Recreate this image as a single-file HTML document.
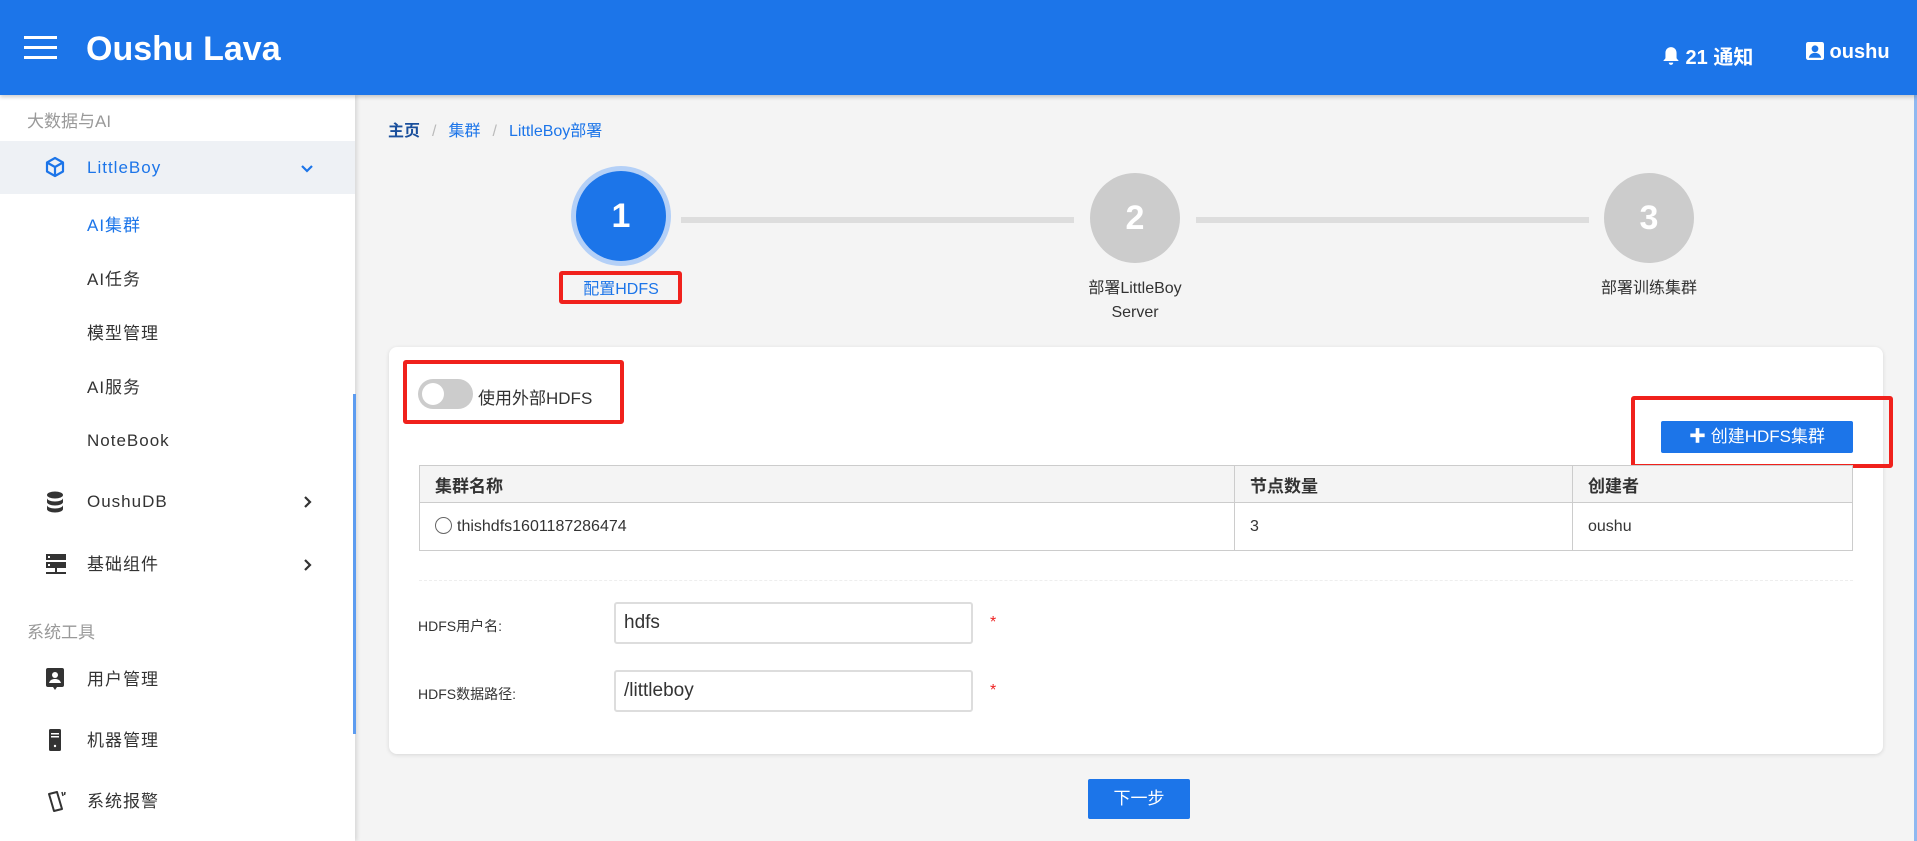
<!DOCTYPE html>
<html><head><meta charset="utf-8"><style>
*{box-sizing:border-box;margin:0;padding:0}
body{width:1917px;height:841px;overflow:hidden;background:#f4f4f4;font-family:"Liberation Sans","Noto Sans CJK SC",sans-serif;color:#333;position:relative}
.hdr{position:absolute;left:0;top:0;width:1917px;height:95px;background:#1c75e9;color:#fff;box-shadow:0 2px 4px rgba(0,0,0,.2);z-index:3}
.ham{position:absolute;left:24px;top:36px;width:33px}
.ham i{display:block;height:3px;background:#fff;margin-bottom:7px}
.logo{position:absolute;left:86px;top:30px;font-size:34px;font-weight:bold}
.hr{position:absolute;top:41px;font-size:20px;font-weight:bold}
.side{position:absolute;left:0;top:95px;width:355px;height:746px;background:#fff;box-shadow:2px 0 4px rgba(0,0,0,.12);z-index:2}
.sb{position:absolute;left:353px;top:394px;width:3px;height:340px;background:#5d9cf0;z-index:3}
.grp{position:absolute;left:27px;font-size:17px;color:#999}
.it{position:absolute;left:0;width:355px;height:54px;line-height:54px;font-size:17px;letter-spacing:1px;color:#333}
.it .t{position:absolute;left:87px}
.it .ic{position:absolute;left:45px;top:17px}
.it .ch{position:absolute;left:301px;top:20px}
.bc{position:absolute;left:388px;top:117px;font-size:16px;color:#1c75e9}
.bc b{color:#1a4f9c}
.bc s{text-decoration:none;color:#bbb;margin:0 12px}
.circ{position:absolute;width:90px;height:90px;border-radius:50%;background:#ccc;color:#fff;font-size:34px;font-weight:bold;text-align:center;line-height:90px}
.line{position:absolute;height:6px;background:#ddd;top:217px}
.lbl{position:absolute;font-size:16px;color:#333;text-align:center;width:200px;line-height:24px}
.card{position:absolute;left:389px;top:347px;width:1494px;height:407px;background:#fff;border-radius:8px;box-shadow:0 1px 4px rgba(0,0,0,.12)}
.red{position:absolute;border:4px solid #f0211c;border-radius:3px}
table{position:absolute;left:419px;top:465px;width:1434px;border-collapse:collapse;font-size:16px}
td,th{border:1px solid #ccc;padding:0 15px;text-align:left}
th{height:37px;background:#f4f4f4;font-weight:bold;font-size:17px}
td{height:48px}
.fl{position:absolute;left:418px;font-size:14px;color:#333}
.inp{position:absolute;left:614px;width:359px;height:42px;border:2px solid #ddd;border-radius:3px;font-size:19px;line-height:38px;padding:0 8px;color:#333}
.ast{position:absolute;left:990px;color:#e22;font-size:16px}
.btn{position:absolute;background:#1c75e9;color:#fff;border-radius:2px;text-align:center}
</style></head><body>
<div class="hdr">
<div class="ham"><i></i><i></i><i></i></div>
<div class="logo">Oushu Lava</div>
<div class="hr" style="left:1662px"><svg width="18" height="20" viewBox="0 0 16 18" style="vertical-align:-2px"><path d="M8 1c-3 0-5 2.3-5 5.3V11L1 13.5h14L13 11V6.3C13 3.3 11 1 8 1zM6 15h4a2 2 0 0 1-4 0z" fill="#fff"/></svg> 21 通知</div>
<div class="hr" style="left:1806px"><svg width="18" height="18" viewBox="0 0 16 16" style="vertical-align:-2px"><rect x="0" y="0" width="16" height="16" rx="2" fill="#fff"/><circle cx="8" cy="6" r="3" fill="#1c75e9"/><path d="M2.5 14c.5-3 3-4.5 5.5-4.5s5 1.5 5.5 4.5z" fill="#1c75e9"/></svg> oushu</div>
</div>
<div class="side">
<div class="grp" style="top:12px">大数据与AI</div>
<div class="it" style="top:46px;background:#eef1f5;height:53px;color:#1c75e9"><svg class="ic" width="20" height="22" viewBox="0 0 20 22" style="top:15px"><path d="M10 2L2 6.5v9L10 20l8-4.5v-9zM2 6.5l8 4.5 8-4.5M10 11v9" fill="none" stroke="#1c75e9" stroke-width="2.2" stroke-linejoin="round"/></svg><span class="t">LittleBoy</span><svg class="ch" width="14" height="14" viewBox="0 0 14 14" style="left:300px"><path d="M2 5l5 5 5-5" fill="none" stroke="#1c75e9" stroke-width="2.2"/></svg></div>
<div class="it" style="top:104px;color:#1c75e9"><span class="t">AI集群</span></div>
<div class="it" style="top:158px"><span class="t">AI任务</span></div>
<div class="it" style="top:212px"><span class="t">模型管理</span></div>
<div class="it" style="top:266px"><span class="t">AI服务</span></div>
<div class="it" style="top:319px"><span class="t">NoteBook</span></div>
<div class="it" style="top:380px"><svg class="ic" width="20" height="22" viewBox="0 0 20 22" style="top:16px"><ellipse cx="10" cy="4" rx="8" ry="3.5" fill="#333"/><path d="M2 7c0 2 3.6 3.5 8 3.5s8-1.5 8-3.5v4c0 2-3.6 3.5-8 3.5S2 13 2 11zM2 14c0 2 3.6 3.5 8 3.5s8-1.5 8-3.5v4c0 2-3.6 3.5-8 3.5S2 20 2 18z" fill="#333"/></svg><span class="t">OushuDB</span><svg class="ch" width="14" height="14" viewBox="0 0 14 14"><path d="M4 2l5 5-5 5" fill="none" stroke="#333" stroke-width="2.2"/></svg></div>
<div class="it" style="top:443px"><svg class="ic" width="22" height="22" viewBox="0 0 22 22" style="top:15px"><rect x="1" y="1" width="20" height="6" fill="#333"/><rect x="1" y="9" width="20" height="6" fill="#333"/><rect x="3" y="3" width="2" height="2" fill="#fff"/><rect x="3" y="11" width="2" height="2" fill="#fff"/><rect x="10" y="15" width="2" height="4" fill="#333"/><rect x="1" y="19" width="20" height="2" fill="#333"/></svg><span class="t">基础组件</span><svg class="ch" width="14" height="14" viewBox="0 0 14 14"><path d="M4 2l5 5-5 5" fill="none" stroke="#333" stroke-width="2.2"/></svg></div>
<div class="grp" style="top:523px">系统工具</div>
<div class="it" style="top:558px"><svg class="ic" width="20" height="24" viewBox="0 0 20 24" style="top:14px"><rect x="1" y="1" width="18" height="19" rx="2" fill="#333"/><circle cx="10" cy="8" r="3" fill="#fff"/><path d="M4 16c1-3 3-4 6-4s5 1 6 4z" fill="#fff"/><path d="M8 20h4l-2 3z" fill="#333"/></svg><span class="t">用户管理</span></div>
<div class="it" style="top:619px"><svg class="ic" width="20" height="24" viewBox="0 0 20 24" style="top:14px"><rect x="4" y="1" width="12" height="22" rx="1.5" fill="#333"/><rect x="6" y="5" width="8" height="1.5" fill="#fff"/><rect x="6" y="8" width="8" height="1.5" fill="#fff"/><circle cx="10" cy="18" r="1.2" fill="#fff"/></svg><span class="t">机器管理</span></div>
<div class="it" style="top:680px"><svg class="ic" width="22" height="24" viewBox="0 0 22 24" style="top:14px"><path d="M4 5l8-2 5 17-8 2z" fill="none" stroke="#333" stroke-width="2" stroke-linejoin="round"/><path d="M17 3l1 4M20 3l-.5 3" stroke="#333" stroke-width="1.5"/></svg><span class="t">系统报警</span></div>
</div>
<div class="sb"></div>
<div style="position:absolute;left:1914px;top:95px;width:3px;height:746px;background:#8fb8f0"></div>
<div class="bc"><b>主页</b><s>/</s>集群<s>/</s>LittleBoy部署</div>
<div class="circ" style="left:576px;top:171px;background:#1c75e9;box-shadow:0 0 0 5px #b4d0f7">1</div>
<div class="line" style="left:681px;width:393px"></div>
<div class="circ" style="left:1090px;top:173px">2</div>
<div class="line" style="left:1196px;width:393px"></div>
<div class="circ" style="left:1604px;top:173px">3</div>
<div class="lbl" style="left:521px;top:278px;color:#1c75e9">配置HDFS</div>
<div class="red" style="left:559px;top:271px;width:123px;height:33px"></div>
<div class="lbl" style="left:1035px;top:277px">部署LittleBoy<br>Server</div>
<div class="lbl" style="left:1549px;top:277px">部署训练集群</div>
<div class="card"></div>
<div class="red" style="left:403px;top:360px;width:221px;height:64px"></div>
<div style="position:absolute;left:418px;top:379px;width:55px;height:30px;border-radius:15px;background:#ccc"><div style="position:absolute;left:4px;top:4px;width:22px;height:22px;border-radius:50%;background:#fff"></div></div>
<div style="position:absolute;left:478px;top:384px;font-size:17px">使用外部HDFS</div>
<div class="red" style="left:1631px;top:396px;width:262px;height:72px"></div>
<div class="btn" style="left:1661px;top:421px;width:192px;height:32px;line-height:32px;font-size:17px"><b>✚</b> 创建HDFS集群</div>
<table><tr><th style="width:815px">集群名称</th><th style="width:338px">节点数量</th><th>创建者</th></tr>
<tr><td><span style="display:inline-block;width:17px;height:17px;border:1px solid #666;border-radius:50%;vertical-align:-3px;margin-right:5px"></span>thishdfs1601187286474</td><td>3</td><td>oushu</td></tr></table>
<div style="position:absolute;left:419px;top:580px;width:1434px;border-top:1px dashed #eee"></div>
<div class="fl" style="top:616px">HDFS用户名:</div>
<div class="inp" style="top:602px">hdfs</div>
<div class="ast" style="top:614px">*</div>
<div class="fl" style="top:684px">HDFS数据路径:</div>
<div class="inp" style="top:670px">/littleboy</div>
<div class="ast" style="top:682px">*</div>
<div class="btn" style="left:1088px;top:779px;width:102px;height:40px;line-height:40px;font-size:17px">下一步</div>
</body></html>
